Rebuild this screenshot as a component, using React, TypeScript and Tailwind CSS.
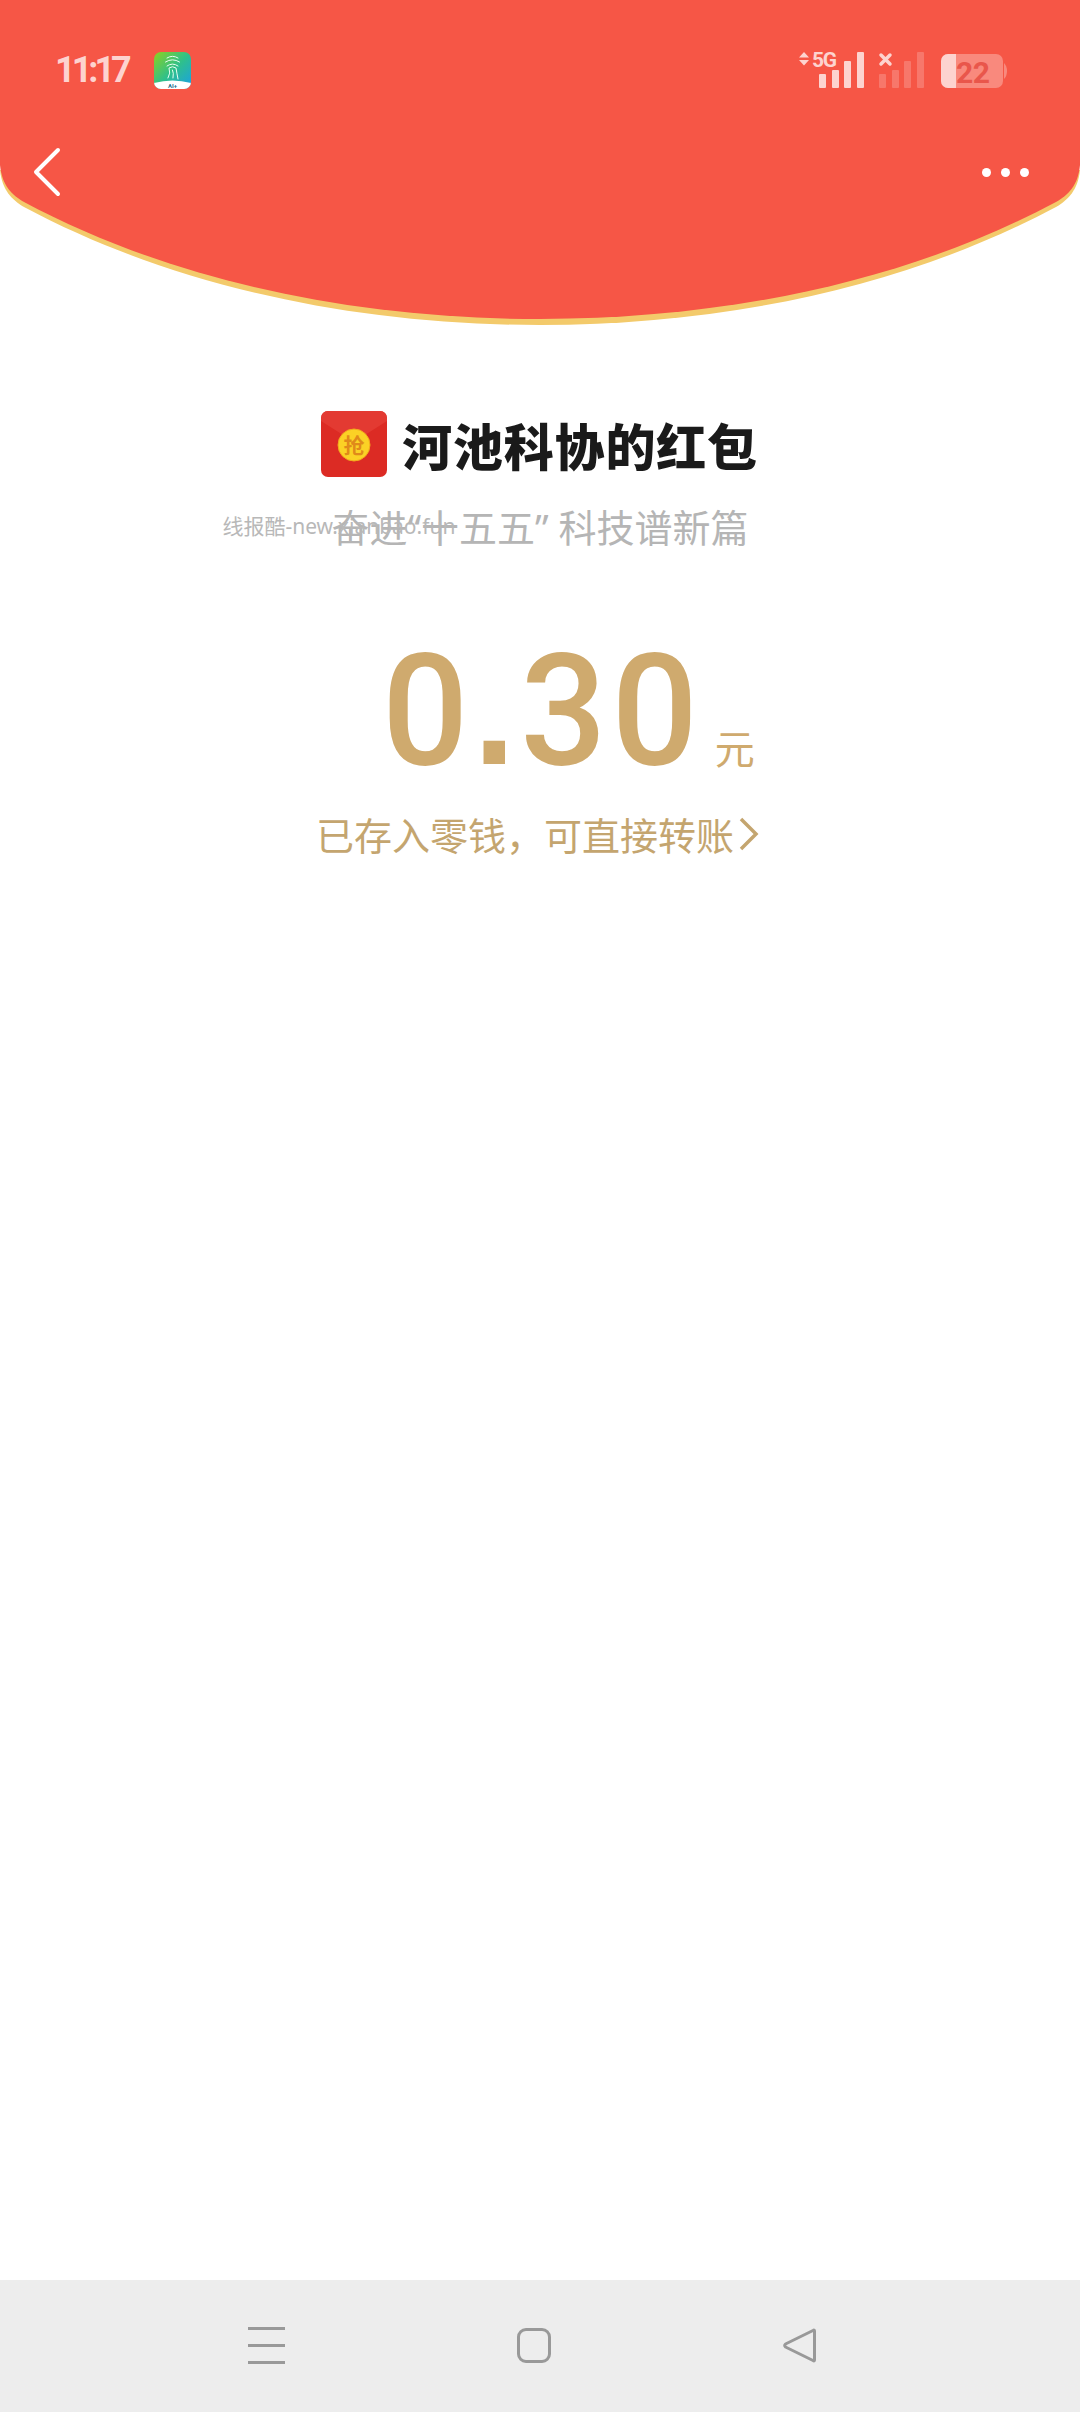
function StatusIcons() {
  return (
    <svg width="214" height="44" viewBox="0 0 214 44" className="block overflow-visible">
      {/* up / down arrows */}
      <path d="M5 0 L10 5.500 H0 Z M0 8 H10 L5 13.500 Z" fill="#fdd3cf" />
      <text x="13" y="15" fontFamily="Roboto, sans-serif" fontWeight="700" fontSize="21" letterSpacing="-1.2" fill="#fdd3cf">5G</text>
      <g fill="#fdd3cf">
        <rect x="20" y="22" width="7" height="14" rx="1" />
        <rect x="33" y="18" width="7" height="18" rx="1" />
        <rect x="45" y="9" width="7" height="27" rx="1" />
        <rect x="58" y="0" width="7" height="36" rx="1" />
      </g>
      <path d="M82 3 L91 12 M91 3 L82 12" stroke="#fdd3cf" strokeWidth="3.500" strokeLinecap="round" />
      <g fill="#ffffff" fillOpacity="0.2">
        <rect x="80" y="22" width="7" height="14" rx="1" />
        <rect x="93" y="18" width="7" height="18" rx="1" />
        <rect x="105" y="9" width="7" height="27" rx="1" />
        <rect x="118" y="0" width="7" height="36" rx="1" />
      </g>
      <rect x="142" y="2" width="62" height="34" rx="7" fill="#ffffff" fillOpacity="0.3" />
      <path d="M149 2 H157 V36 H149 A7 7 0 0 1 142 29 V9 A7 7 0 0 1 149 2 Z" fill="#fdd3cf" />
      <path d="M205 11 Q208 14 208 19 Q208 24 205 27 Z" fill="#ffffff" fillOpacity="0.3" />
      <text x="157" y="31" fontFamily="Roboto, sans-serif" fontWeight="700" fontSize="30" letterSpacing="-0.5" fill="#e9564b">22</text>
    </svg>
  );
}

function AppIcon() {
  return (
    <svg width="37" height="37" viewBox="0 0 37 37" className="block">
      <defs>
        <linearGradient id="appGrad" x1="0" y1="0" x2="1" y2="1">
          <stop offset="0" stopColor="#8ed21f" />
          <stop offset="0.5" stopColor="#2fc08a" />
          <stop offset="1" stopColor="#1a9fe8" />
        </linearGradient>
      </defs>
      <rect width="37" height="37" rx="7" fill="url(#appGrad)" />
      <path d="M0 31 Q18.500 26 37 31 V30 A7 7 0 0 1 30 37 H7 A7 7 0 0 1 0 30 Z" fill="#ffffff" />
      <g fill="none" stroke="#e8fff2" strokeWidth="1" strokeLinecap="round">
        <path d="M13 6 Q18.500 2.500 24 6" />
        <path d="M11.500 10 Q18.500 5.500 25.500 10" />
        <path d="M13 14 Q18.500 10 24 14" />
        <path d="M14 26 Q17 21 15 16 Q18.500 13.500 22 16 Q23 22 24 27" />
        <path d="M19 26 Q20 21 18.500 18" />
      </g>
      <text x="18.500" y="35.500" textAnchor="middle" fontFamily="Roboto, sans-serif" fontSize="6" fontWeight="700" fill="#2a6f8f">AI+</text>
    </svg>
  );
}

function RedPacket() {
  return (
    <svg width="66" height="66" viewBox="0 0 66 66" className="block">
      <rect width="66" height="66" rx="7" fill="#dc2b24" />
      <path d="M0 7 A7 7 0 0 1 7 0 H59 A7 7 0 0 1 66 7 V10 L36 29 Q33 31 30 29 L0 10 Z" fill="#e33a32" />
      <circle cx="33" cy="34" r="16" fill="#fbd125" />
      <circle cx="33" cy="34" r="16" fill="none" stroke="#f2a81d" strokeWidth="1" />
      <text x="33" y="42" textAnchor="middle" fontFamily='"Noto Sans CJK SC", sans-serif' fontWeight="700" fontSize="21" fill="#e08a1a">抢</text>
    </svg>
  );
}

export default function App() {
  return (
    <div className="flex min-h-[2412px] w-[1080px] flex-col bg-white font-['Noto_Sans_CJK_SC','Noto_Sans',sans-serif]">
      <header className="relative h-[330px]">
        <svg width="1080" height="330" viewBox="0 0 1080 330" className="absolute inset-0">
          <path d="M0 170 C2 190 12 200 24 207 C170 285 350 325 540 325 C730 325 910 285 1056 207 C1068 200 1078 190 1080 170 Z" fill="#f3ca6b" />
          <path d="M0 0 H1080 V165 C1078 186 1068 195 1056 202 C910 280 730 319 540 319 C350 319 170 280 24 202 C12 195 2 186 0 165 Z" fill="#f65646" />
        </svg>
        <div className="relative flex h-[147px] items-start pt-[52px] pr-[67px] pl-[55px]">
          <div className="flex items-center">
            <span className="w-[99px] font-['Roboto',sans-serif] text-[36px] leading-[37px] font-bold tracking-[-4px] text-[#fdd3cf]">11:17</span>
            <AppIcon />
          </div>
          <div className="ml-auto">
            <StatusIcons />
          </div>
        </div>
        <div className="relative flex items-center justify-between pr-[51px] pl-[33px]">
          <svg width="30" height="50" viewBox="0 0 30 50" className="block">
            <path d="M25 3 L3 25 L25 47" fill="none" stroke="#ffffff" strokeWidth="4" strokeLinecap="round" strokeLinejoin="round" />
          </svg>
          <div className="flex gap-[10px]">
            <span className="h-[9px] w-[9px] rounded-full bg-white" />
            <span className="h-[9px] w-[9px] rounded-full bg-white" />
            <span className="h-[9px] w-[9px] rounded-full bg-white" />
          </div>
        </div>
      </header>

      <main className="flex flex-1 flex-col items-center pt-[81px]">
        <div className="flex items-center gap-[15px] pr-[1px]">
          <RedPacket />
          <h1 className="text-[50px] leading-[66px] font-black tracking-[0.8px] text-[#1a1a1a]">河池科协的红包</h1>
        </div>
        <div className="relative mt-[21px]">
          <p className="font-['Noto_Sans','Noto_Sans_CJK_SC',sans-serif] text-[38px] leading-[58px] text-[#b5b5b5]">奋进“十五五” 科技谱新篇</p>
          <span className="absolute top-[14px] left-[-109px] font-['Noto_Sans','Noto_Sans_CJK_SC',sans-serif] text-[21px] leading-[28px] whitespace-nowrap text-[#b8b8b8]">线报酷-new.xianbao.fun</span>
        </div>
        <div className="mt-[70px] flex items-baseline pl-[57px]">
          <span className="origin-left scale-x-[0.98] font-['Roboto',sans-serif] text-[155px] leading-[170px] font-medium tracking-[5px] text-[#cfaa6e]">
            0<span className="font-['Liberation_Sans',sans-serif] font-bold">.</span>30
          </span>
          <span className="ml-[5px] text-[40px] leading-[40px] text-[#cfaa6e]">元</span>
        </div>
        <div className="mt-[10px] flex items-center pr-[4px] text-[#c4a56f]">
          <span className="text-[38px] leading-[56px]">已存入零钱，可直接转账</span>
          <svg width="22" height="36" viewBox="0 0 22 36" className="ml-[4px] block">
            <path d="M3 3 L18 18 L3 33" fill="none" stroke="#c4a56f" strokeWidth="3.500" />
          </svg>
        </div>
      </main>

      <footer className="flex h-[132px] items-center bg-[#ededed] pb-[2px] pl-[248px]">
        <div className="flex w-[37px] flex-col gap-[14px]">
          <span className="h-[3px] bg-[#999999]" />
          <span className="h-[3px] bg-[#999999]" />
          <span className="h-[3px] bg-[#999999]" />
        </div>
        <span className="ml-[232px] h-[35px] w-[34px] rounded-[9px] border-[3px] border-[#999999]" />
        <svg width="34" height="35" viewBox="0 0 34 35" className="ml-[232px] block">
          <path d="M31.500 3 Q31.500 1.500 30 2.500 L2.500 16 Q1 17.500 2.500 19 L30 32.500 Q31.500 33.500 31.500 32 Z" fill="none" stroke="#999999" strokeWidth="3" strokeLinejoin="round" />
        </svg>
      </footer>
    </div>
  );
}
